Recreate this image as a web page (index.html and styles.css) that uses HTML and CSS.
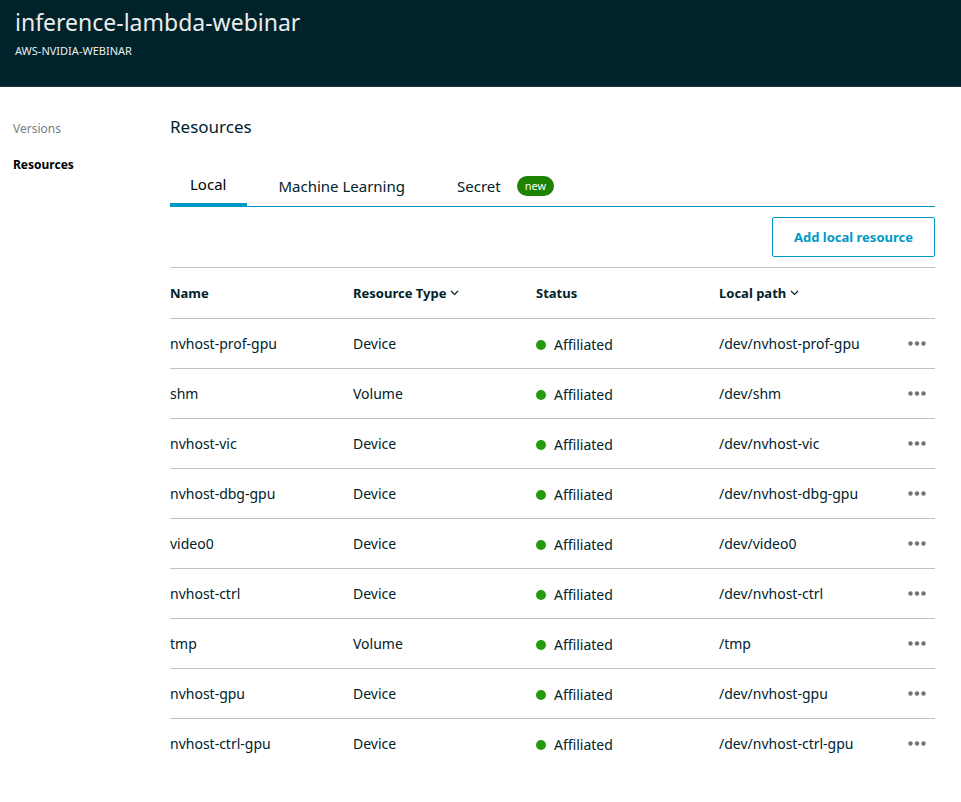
FILE: index.html
```html
<!DOCTYPE html>
<html lang="en">
<head>
<meta charset="utf-8">
<title>inference-lambda-webinar</title>
<link rel="stylesheet" href="styles.css">
</head>
<body>
<header class="banner">
  <h1 class="banner-title">inference-lambda-webinar</h1>
  <p class="banner-group">AWS-NVIDIA-WEBINAR</p>
</header>
<div class="layout">
  <nav class="side-nav">
    <a class="side-link" href="#versions">Versions</a>
    <a class="side-link side-link-active" href="#resources">Resources</a>
  </nav>
  <main class="content">
    <h2 class="heading">Resources</h2>
    <div class="tabs" role="tablist">
      <button class="tab tab-active" type="button" role="tab" aria-selected="true">Local</button>
      <button class="tab" type="button" role="tab" aria-selected="false">Machine Learning</button>
      <button class="tab" type="button" role="tab" aria-selected="false">Secret <span class="badge">new</span></button>
    </div>
    <div class="toolbar"><button class="add-button" type="button">Add local resource</button></div>
    <table class="resources">
      <colgroup><col><col><col><col><col class="col-actions"></colgroup>
      <thead>
        <tr>
          <th scope="col">Name</th>
          <th scope="col"><button class="sort" type="button">Resource Type<svg class="chevron" viewBox="0 0 9 6" aria-hidden="true"><path d="M1 1l3.500 3.500L8 1"/></svg></button></th>
          <th scope="col">Status</th>
          <th scope="col"><button class="sort" type="button">Local path<svg class="chevron" viewBox="0 0 9 6" aria-hidden="true"><path d="M1 1l3.500 3.500L8 1"/></svg></button></th>
          <td></td>
        </tr>
      </thead>
      <tbody id="rows"></tbody>
    </table>
  </main>
</div>
<script src="app.js"></script>
</body>
</html>
```
FILE: styles.css
```css
* { box-sizing: border-box; }
body {
  margin: 0;
  background: #fff;
  color: #00222b;
  font: 14px/20px "Noto Sans", "Open Sans", sans-serif;
}
button {
  padding: 0;
  border: 0;
  background: none;
  color: inherit;
  font: inherit;
  cursor: pointer;
}
.banner {
  padding: 7px 15px 27px;
  border-bottom: 1px solid #1f3b43;
  background: #00222b;
  color: #eaeded;
}
.banner-title {
  margin: 0 0 6px;
  font-size: 23px;
  line-height: 30px;
  font-weight: 400;
}
.banner-group {
  margin: 0;
  font-size: 11px;
  line-height: 16px;
}
.layout {
  display: grid;
  grid-template-columns: 144px minmax(0, 1fr);
  column-gap: 13px;
  padding: 27px 26px 32px 13px;
}
.side-nav {
  display: flex;
  flex-direction: column;
  align-items: flex-start;
  gap: 16px;
  padding-top: 5px;
  font-size: 12px;
}
.side-link {
  color: #7b7b7b;
  text-decoration: none;
}
.side-link-active {
  color: #000;
  font-weight: 700;
}
.heading {
  margin: 0 0 26px;
  font-size: 17px;
  line-height: 26px;
  font-weight: 400;
}
.tabs {
  display: flex;
  gap: 10px;
  height: 41px;
  border-bottom: 1px solid #0099c5;
  font-size: 15px;
}
.tab {
  display: flex;
  align-items: center;
  gap: 16px;
  height: 41px;
  padding: 0 21px 2px;
}
.tab-active {
  padding: 0 21px 2px 20px;
  border-bottom: 4px solid #0099c5;
  color: #000;
}
.badge {
  padding: 0 8px;
  border-radius: 10px;
  background: #1d8102;
  color: #fff;
  font-size: 11px;
  line-height: 20px;
}
.toolbar {
  display: flex;
  justify-content: flex-end;
  padding: 10px 0;
}
.add-button {
  height: 40px;
  padding: 0 21px;
  border: 1px solid #0099c5;
  border-radius: 2px;
  color: #0099c5;
  font-size: 13px;
  font-weight: 700;
}
.resources {
  width: 100%;
  table-layout: fixed;
  border-spacing: 0;
}
.col-actions { width: 33px; }
.resources th,
.resources td {
  height: 50px;
  padding: 0;
  border-top: 1px solid #bfc1c1;
  text-align: left;
  vertical-align: middle;
}
.resources thead th,
.resources thead td { height: 51px; }
.resources thead th { font-size: 13px; }
.sort {
  display: flex;
  align-items: center;
  gap: 4px;
  white-space: nowrap;
}
.chevron {
  width: 9px;
  height: 6px;
  fill: none;
  stroke: #00222b;
  stroke-width: 1.2;
}
.status {
  display: flex;
  align-items: center;
  gap: 8px;
  padding-top: 2px;
}
.status::before {
  width: 10px;
  height: 10px;
  border-radius: 50%;
  background: #249a0d;
  content: "";
}
.more {
  display: block;
  margin-left: 6px;
}
.dots {
  display: block;
  width: 18px;
  height: 5px;
  fill: #737373;
}
```
FILE: app.js
```js
const resources = [
  ["nvhost-prof-gpu", "Device"],
  ["shm", "Volume"],
  ["nvhost-vic", "Device"],
  ["nvhost-dbg-gpu", "Device"],
  ["video0", "Device"],
  ["nvhost-ctrl", "Device"],
  ["tmp", "Volume"],
  ["nvhost-gpu", "Device"],
  ["nvhost-ctrl-gpu", "Device"]
];
document.getElementById("rows").innerHTML = resources.map(([name, type]) => `
  <tr>
    <td>${name}</td>
    <td>${type}</td>
    <td><span class="status">Affiliated</span></td>
    <td>${name === "tmp" ? "/tmp" : "/dev/" + name}</td>
    <td><button class="more" type="button" aria-label="Actions"><svg class="dots" viewBox="0 0 18 5"><circle cx="2.500" cy="2.500" r="2.200"/><circle cx="9" cy="2.500" r="2.200"/><circle cx="15.500" cy="2.500" r="2.200"/></svg></button></td>
  </tr>`).join("");
```
